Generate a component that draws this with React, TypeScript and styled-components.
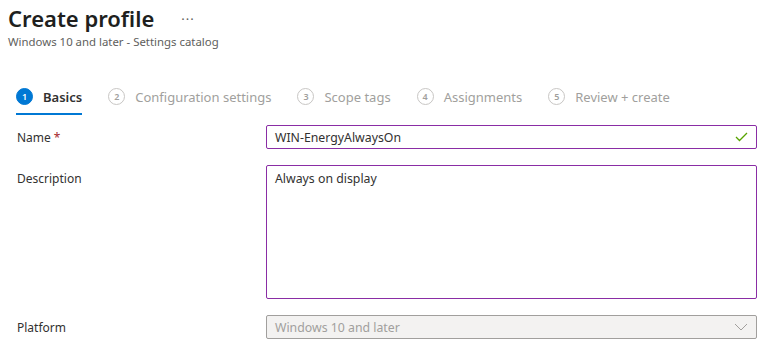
import React from 'react';
import styled, { createGlobalStyle } from 'styled-components';

const GlobalStyle = createGlobalStyle`
  html, body {
    margin: 0;
    padding: 0;
    background: #ffffff;
  }
  body {
    font-family: "Segoe UI", "Noto Sans", "Open Sans", sans-serif;
    color: #323130;
  }
`;

const Page = styled.div`
  width: 772px;
  height: 352px;
  overflow: hidden;
`;

const Header = styled.div`
  padding: 2px 8px 0;
`;

const TitleRow = styled.div`
  display: flex;
  align-items: center;
  gap: 27px;
`;

const Title = styled.h1`
  margin: 0;
  font-size: 22px;
  line-height: 32px;
  font-weight: 600;
  color: #201f1e;
`;

const More = styled.span`
  font-size: 13px;
  color: #605e5c;
  letter-spacing: 1px;
  margin-top: 2px;
`;

const Subtitle = styled.div`
  font-size: 11.4px;
  line-height: 16px;
  color: #605e5c;
`;

const Tabs = styled.div`
  display: flex;
  margin: 33px 0 0 16px;
  gap: 26px;
`;

const Tab = styled.div<{ $active?: boolean }>`
  display: flex;
  align-items: center;
  gap: 10px;
  height: 32px;
  padding-bottom: 3px;
  border-bottom: 2px solid ${p => (p.$active ? '#0078d4' : 'transparent')};
  font-size: 13px;
  font-weight: ${p => (p.$active ? 600 : 400)};
  color: ${p => (p.$active ? '#323130' : '#a19f9d')};
  box-sizing: border-box;
`;

const Step = styled.span<{ $active?: boolean }>`
  width: 17px;
  height: 17px;
  border-radius: 50%;
  box-sizing: border-box;
  display: flex;
  align-items: center;
  justify-content: center;
  font-size: 9px;
  font-weight: 600;
  background: ${p => (p.$active ? '#0078d4' : 'transparent')};
  color: ${p => (p.$active ? '#ffffff' : '#a19f9d')};
  border: 1px solid ${p => (p.$active ? '#0078d4' : '#c8c6c4')};
`;

const Form = styled.div`
  display: grid;
  grid-template-columns: 249px 491px;
  row-gap: 16px;
  margin: 10px 0 0 17px;
`;

const Label = styled.label<{ $top?: boolean }>`
  font-size: 12px;
  color: #323130;
  align-self: ${p => (p.$top ? 'start' : 'center')};
  padding-top: ${p => (p.$top ? '5px' : '0')};
`;

const Required = styled.span`
  color: #a4262c;
  margin-left: 3px;
`;

const Field = styled.div<{ $disabled?: boolean; $height?: number }>`
  box-sizing: border-box;
  height: ${p => p.$height ?? 24}px;
  border: 1px solid ${p => (p.$disabled ? '#a19f9d' : '#8a2da5')};
  border-radius: 2px;
  background: ${p => (p.$disabled ? '#f3f2f1' : '#ffffff')};
  color: ${p => (p.$disabled ? '#a19f9d' : '#323130')};
  display: flex;
  align-items: ${p => (p.$height ? 'flex-start' : 'center')};
  justify-content: space-between;
  padding: ${p => (p.$height ? '4px 8px' : '0 8px')};
  font-size: 12.3px;
`;

const Check = () => (
  <svg width="13" height="10" viewBox="0 0 13 10">
    <path d="M1 5 L4.5 8.5 L12 1" fill="none" stroke="#57a300" strokeWidth="1.3" />
  </svg>
);

const Chevron = () => (
  <svg width="14" height="8" viewBox="0 0 14 8">
    <path d="M1 1 L7 7 L13 1" fill="none" stroke="#a19f9d" strokeWidth="1" />
  </svg>
);

const steps = ['Basics', 'Configuration settings', 'Scope tags', 'Assignments', 'Review + create'];

export default function App() {
  return (
    <Page>
      <GlobalStyle />
      <Header>
        <TitleRow>
          <Title>Create profile</Title>
          <More>···</More>
        </TitleRow>
        <Subtitle>Windows 10 and later - Settings catalog</Subtitle>
      </Header>
      <Tabs>
        {steps.map((s, i) => (
          <Tab key={s} $active={i === 0}>
            <Step $active={i === 0}>{i + 1}</Step>
            {s}
          </Tab>
        ))}
      </Tabs>
      <Form>
        <Label>
          Name<Required>*</Required>
        </Label>
        <Field>
          WIN-EnergyAlwaysOn
          <Check />
        </Field>
        <Label $top>Description</Label>
        <Field $height={134}>Always on display</Field>
        <Label>Platform</Label>
        <Field $disabled>
          Windows 10 and later
          <Chevron />
        </Field>
      </Form>
    </Page>
  );
}
